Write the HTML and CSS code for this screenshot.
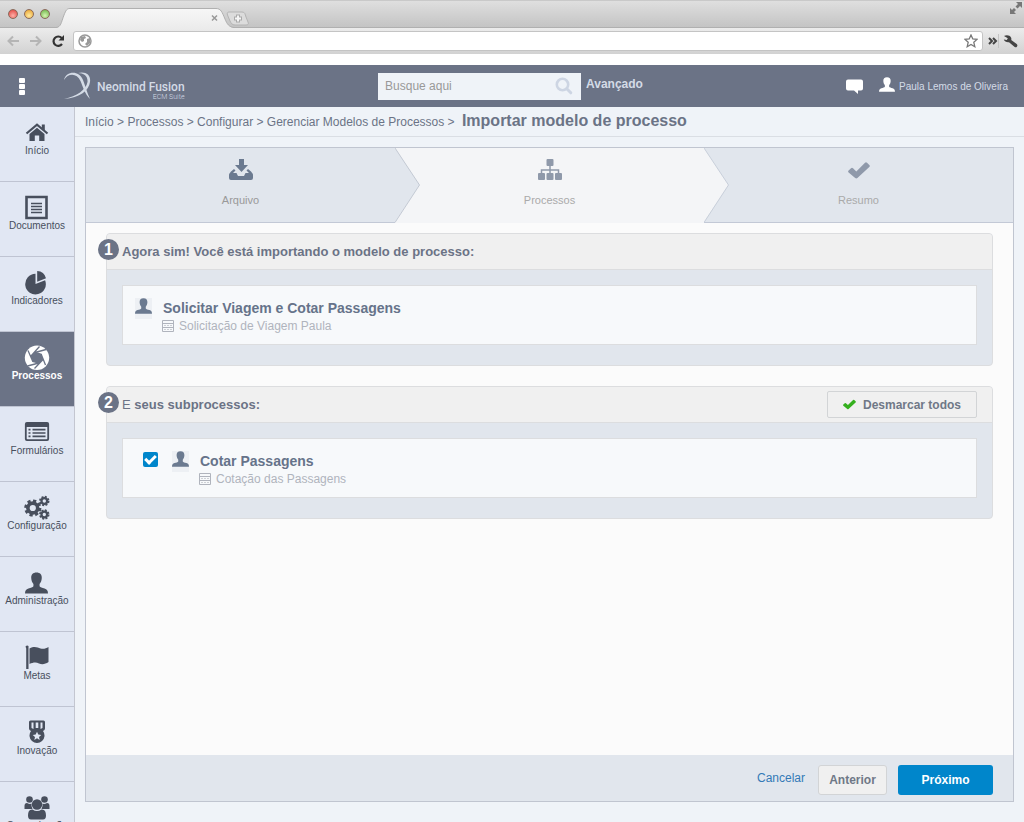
FILE: index.html
```html
<!DOCTYPE html>
<html lang="pt-BR">
<head>
<meta charset="utf-8">
<title>Neomind Fusion - Importar modelo de processo</title>
<link rel="stylesheet" href="styles.css">
</head>
<body>
<svg class="defs" width="0" height="0" aria-hidden="true">
  <symbol id="user" viewBox="0 0 24 22"><path d="M12 0c3.800 0 5.700 2.300 5.500 5.800-.1 2.800-1 4.700-2.300 6.200v2.400c.6 1.200 2.800 1.500 5.200 2.300 2.600.9 3.500 2 3.600 5.300H0c.1-3.300 1-4.400 3.600-5.300 2.400-.8 4.600-1.100 5.200-2.300V12C7.500 10.500 6.600 8.600 6.500 5.800 6.300 2.300 8.200 0 12 0z"/></symbol>
  <symbol id="check" viewBox="0 0 22 17"><path d="M.6 8.600L3 6.200q1-.9 2 0L8.300 9.500 17 .8q1-1 2 0l2.300 2.300q1 1 0 2L9.400 16q-1.100.9-2.200 0L.6 10.600q-1-1 0-2z"/></symbol>
  <symbol id="form" viewBox="0 0 12 12"><path fill="none" stroke="currentColor" d="M.5.5h11v11H.5zM1 3.500h10M1 7.500h10"/><path fill="none" stroke="currentColor" stroke-opacity=".6" stroke-dasharray="2 1" d="M2 5.500h8M2 9.500h8"/></symbol>
</svg>

<div class="browser">
  <div class="tabstrip">
    <span class="lights"><i class="light red"></i><i class="light amber"></i><i class="light green"></i></span>
    <svg class="tab" viewBox="0 0 184 20" width="184" height="20">
      <defs><linearGradient id="tabfill" x2="0" y2="1"><stop offset="0" stop-color="#f7f7f7"/><stop offset="1" stop-color="#ececec"/></linearGradient></defs>
      <path d="M0 20C5 19 5 15 8 7 10 2 11 .5 14 .5H160C165 .5 166 4 169 11c2 5 4 8 9 9z" fill="url(#tabfill)"/>
      <path d="M0 19.500C5 19 5 15 8 7 10 2 11 .5 14 .5H160C165 .5 166 4 169 11c2 5 4 8 9 8.500" fill="none" stroke="#b0b0b0"/>
      <path d="M156 7.500l5 5m0-5l-5 5" stroke="#999" stroke-width="1.500"/>
    </svg>
    <svg class="newtab" viewBox="0 0 24 15" width="24" height="15">
      <path d="M3 1h13c3 0 3 2 4 5l2 5c1 2 0 3-2 3H9c-3 0-4-2-5-4L1.500 4C.8 2 1.500 1 3 1z" fill="#dcdcdc" stroke="#b4b4b4"/>
      <path d="M12 3.500v8M8 7.500h8" stroke="#aaa" stroke-width="4"/><path d="M12 4.500v6M9 7.500h6" stroke="#f5f5f5" stroke-width="2"/>
    </svg>
    <svg class="expand" viewBox="0 0 12 12" width="12" height="12"><path d="M6 0h6v6L10 4 7.500 6.500l-2-2L8 2zM6 12H0V6l2 2 2-2 2 2-2 2z" fill="#777"/></svg>
  </div>
  <div class="toolbar">
    <svg viewBox="0 0 62 18" width="62" height="18" fill="none" stroke-width="2">
      <path d="M13 9H2.500m4.500-4.500L2.500 9 7 13.500M24 9h10.500m-4.500-4.500L34.500 9 30 13.500" stroke="#b5b5b5"/>
      <path d="M56 12a4.700 4.700 0 1 1-.3-6" stroke="#333" stroke-width="2.200"/><path d="M58 3v5.500h-5.500z" fill="#333"/>
    </svg>
    <div class="address">
      <svg viewBox="0 0 14 14" width="14" height="14"><circle cx="7" cy="7" r="6" fill="#fff" stroke="#999" stroke-width="1.500"/><path d="M3 3l4-1 1 2-2 1v2L4 8 2 6zM9 5l3-1v5l-2 2-1 1-2-2 2-2z" fill="#999"/></svg>
      <input type="text" aria-label="Endereço">
      <svg viewBox="0 0 14 14" width="14" height="14"><path d="M7 1l1.800 4 4.200.4-3.200 2.900 1 4.400L7 10.400l-3.800 2.300 1-4.400L1 5.400 5.200 5z" fill="#fff" stroke="#777" stroke-width="1.300"/></svg>
    </div>
    <svg viewBox="0 0 34 16" width="34" height="16"><path d="M1 5l3 3-3 3m4-6l3 3-3 3" fill="none" stroke="#444" stroke-width="2"/><path d="M10.500 1v14" stroke="#c4c4c4"/><path d="M16 3c2.500-1.500 6-.8 7 1.500.5 1 .5 2 .2 2.500l5.500 4c1.700 1.400 0 4-2 2.900l-5.700-4.700c-2 .5-4.500-.7-5.200-2.700l3 .5 1-1.700z" fill="#444"/></svg>
  </div>
</div>

<header class="topbar">
  <div class="brand">
    <button class="dots" aria-label="Menu"><i></i><i></i><i></i></button>
    <svg viewBox="0 0 30 28" width="30" height="28" fill="#d4dbe6"><path d="M1 8C3-1 16-2 20 8c2.500 6 4 13 7 19-5-5-7-12-9.500-18C14 1 5 1 1 8z"/><path d="M15 1c8-2 13 2 12 9-1 8-10 16-26 17 13-3 22-9 23.500-17C25 4 21 1 15 1z"/></svg>
    <div class="brandname"><strong>Neomind Fusion</strong><small>ECM Suite</small></div>
  </div>
  <form class="search">
    <div class="searchbox">
      <input type="text" placeholder="Busque aqui" aria-label="Busque aqui">
      <button type="button" aria-label="Buscar"><svg viewBox="0 0 18 18" width="18" height="18" fill="none" stroke="#cdd5e3"><circle cx="7.500" cy="7.500" r="5.700" stroke-width="2.600"/><path d="M12 12l3.800 3.800" stroke-width="3" stroke-linecap="round"/></svg></button>
    </div>
    <a href="#">Avançado</a>
  </form>
  <div class="account">
    <svg viewBox="0 0 17 15" width="17" height="15" fill="#fff"><path d="M2 .5h13q2 0 2 2v7q0 2-2 2h-3V15l-4-3.500H2q-2 0-2-2v-7q0-2 2-2z"/></svg>
    <svg class="person" width="16" height="15" fill="#fff"><use href="#user"/></svg>
    <span>Paula Lemos de Oliveira</span>
  </div>
</header>

<div class="app">
  <nav class="sidebar">
    <a href="#"><svg viewBox="0 0 26 25"><path d="M2.500 13.500L13 4.700l10.500 8.800" fill="none" stroke="currentColor" stroke-width="2.200"/><path d="M17.800 4.500h3v6l-3-2.500zM5.500 14L13 7.800l7.500 6.200v7h-5.300v-5.500h-4.400V21H5.500z"/></svg>Início</a>
    <a href="#"><svg viewBox="0 0 26 25"><path d="M2.500 2h20v21h-20z" fill="none" stroke="currentColor" stroke-width="2.600"/><path d="M7 8.500h11M7 11.500h11M7 14.500h11M7 17.500h11" stroke="currentColor" stroke-width="1.500"/></svg>Documentos</a>
    <a href="#"><svg viewBox="0 0 26 25"><path d="M11.500 3.800V14l9.600-3.700A10.300 10.300 0 1 1 11.500 3.800z"/><path d="M13.200 1a9.700 9.700 0 0 1 8.800 7.200l-8.800 3.500z"/></svg>Indicadores</a>
    <a href="#" class="active"><svg viewBox="0 0 26 25"><circle cx="13" cy="12.800" r="12.200"/><path d="M11 7.500l11-3M17.200 9.200L21.500 20M19 14.500l-8.500 9M14.800 18L3.500 21M8.800 16.500L4 5.500M7 11l8.500-9.500M11 7.500l6.200 1.700 1.800 5.300-4.200 3.500-6-1.500L7 11z" fill="none" stroke="#6b7386" stroke-width="1.300"/><path d="M11 7.500l6.200 1.700 1.800 5.300-4.200 3.500-6-1.500L7 11z" fill="#6b7386"/></svg>Processos</a>
    <a href="#"><svg viewBox="0 0 26 25"><path d="M2.900 2h20.200q2 0 2 2v15q0 2-2 2H2.900q-2 0-2-2V4q0-2 2-2zm-.2 5v11.500q0 .8.800.8h19q.8 0 .8-.8V7z" fill-rule="evenodd"/><path d="M4.500 9.700h2m2 0h13M4.500 13h2m2 0h13M4.500 16.300h2m2 0h13" stroke="currentColor" stroke-width="1.700"/></svg>Formulários</a>
    <a href="#"><svg viewBox="0 0 26 25" fill="none" stroke="currentColor"><circle cx="8.800" cy="13" r="4.900" stroke-width="3.600"/><circle cx="8.800" cy="13" r="7" stroke-width="3.200" stroke-dasharray="3.100 2.400"/><circle cx="20.300" cy="6" r="2.800" stroke-width="2.200"/><circle cx="20.300" cy="6" r="4.200" stroke-width="2" stroke-dasharray="1.900 1.400"/><circle cx="20.300" cy="19.500" r="2.800" stroke-width="2.200"/><circle cx="20.300" cy="19.500" r="4.200" stroke-width="2" stroke-dasharray="1.900 1.400"/></svg>Configuração</a>
    <a href="#"><svg viewBox="0 0 26 25"><use href="#user" x="1" y="2" width="23" height="22"/></svg>Administração</a>
    <a href="#"><svg viewBox="0 0 26 25"><path d="M1.500 1.500Q3-.3 4.500 1v23H2.200V3.500zM5.500 3.500c5-3 8-1 11 0 3 .8 5.500 0 8-1.500V17c-3 2.200-6.500 2.700-9.500 1.500-3-1.500-6-1-9.500.5z"/></svg>Metas</a>
    <a href="#"><svg viewBox="0 0 26 25"><path d="M5 2q0-1.500 1.500-1.500h13Q21 .5 21 2v6.500q0 1.500-2 2.500a7.500 7.500 0 1 1-12 0q-2-1-2-2.500zm2.500.5v5.500l2 .9V2.500zm4.200 0V8h2.600V2.500zm4.800 0v6.400l2-.9V2.500z" fill-rule="evenodd"/><path d="M13 11.800l1.300 2.800 3 .3-2.300 2 .7 3-2.700-1.600-2.700 1.600.7-3-2.300-2 3-.3z" fill="#e1e7f3"/></svg>Inovação</a>
    <a href="#"><svg viewBox="0 0 26 25"><circle cx="5.500" cy="4.500" r="3.300"/><circle cx="20.500" cy="4.500" r="3.300"/><path d="M.5 14V11q0-3 2.500-3 3 1.500 4.500.5-.5 3 1 5.500zM25.500 14V11q0-3-2.500-3-3 1.500-4.500.5.500 3-1 5.500z"/><circle cx="13" cy="9.500" r="5.200"/><path d="M4 20.500q0-6.500 4.500-6 4.500 3 9 0 4.500-.5 4.500 6 0 4-3 4h-12q-3 0-3-4z"/></svg>Comunicação</a>
  </nav>

  <main class="main">
    <div class="crumbs">
      <a href="#">Início</a> &gt; <a href="#">Processos</a> &gt; <a href="#">Configurar</a> &gt; <a href="#">Gerenciar Modelos de Processos</a> &gt; <h1>Importar modelo de processo</h1>
    </div>

    <div class="wizard">
      <ol class="steps">
        <li class="step">
          <svg viewBox="0 0 24 22" width="24" height="22" fill="#6b7a90"><path d="M10 0h5v6h4l-6.500 7L6 6h4zM5 10L2 12.500Q0 14.500 0 16.500V19q0 2 2 2h20q2 0 2-2v-2.500q0-2-2-4L19 10l-1.500 1.500L20 14h-3.500L15 17H9l-1.500-3H4l2.500-2.500z"/></svg>
          <span>Arquivo</span>
          <svg class="chevron" viewBox="0 0 26 75"><path d="M0 0L24.500 37 0 74z" fill="#e1e6ed"/><path d="M0 0L24.500 37 0 74.500" fill="none" stroke="#c3c9d3"/></svg>
        </li>
        <li class="step current">
          <svg viewBox="0 0 24 22" width="24" height="22" fill="#8f99aa"><rect x="8.500" width="7" height="7" rx="1"/><rect y="14" width="7" height="7" rx="1"/><rect x="8.500" y="14" width="7" height="7" rx="1"/><rect x="17" y="14" width="7" height="7" rx="1"/><path d="M12 6v9M3.500 14.500V11h17v3.500" fill="none" stroke="#8f99aa" stroke-width="1.500"/></svg>
          <span>Processos</span>
          <svg class="chevron" viewBox="0 0 26 75"><path d="M0 0L24.500 37 0 74z" fill="#f4f5f7"/><path d="M0 0L24.500 37 0 74.500" fill="none" stroke="#c8cfda"/></svg>
        </li>
        <li class="step">
          <svg width="22" height="22" fill="#8f99aa"><use href="#check" y="3" width="22" height="17"/></svg>
          <span>Resumo</span>
        </li>
      </ol>

      <div class="content">
        <section class="box">
          <header><b class="num">1</b><h2>Agora sim! Você está importando o modelo de processo:</h2></header>
          <div class="boxbody">
            <article class="card">
              <span class="avatar"><svg width="17" height="16"><use href="#user"/></svg></span>
              <div><h3>Solicitar Viagem e Cotar Passagens</h3><p><svg width="12" height="12"><use href="#form"/></svg>Solicitação de Viagem Paula</p></div>
            </article>
          </div>
        </section>
        <section class="box">
          <header><b class="num">2</b><h2><span>E</span> seus subprocessos:</h2>
            <button type="button" class="toggle"><svg width="13" height="11" fill="#35b01e"><use href="#check"/></svg>Desmarcar todos</button>
          </header>
          <div class="boxbody">
            <article class="card selectable">
              <input type="checkbox" id="sub" checked>
              <span class="avatar"><svg width="17" height="16"><use href="#user"/></svg></span>
              <div><h3><label for="sub">Cotar Passagens</label></h3><p><svg width="12" height="12"><use href="#form"/></svg>Cotação das Passagens</p></div>
            </article>
          </div>
        </section>
      </div>

      <footer class="actions">
        <a href="#">Cancelar</a>
        <button type="button" class="prev">Anterior</button>
        <button type="button" class="next">Próximo</button>
      </footer>
    </div>
  </main>
</div>
</body>
</html>
```

FILE: styles.css
```css
* { box-sizing: border-box; }

body {
  margin: 0;
  height: 100vh;
  overflow: hidden;
  display: flex;
  flex-direction: column;
  background: #fff;
  font-family: "Liberation Sans", Arial, sans-serif;
  font-size: 12px;
  color: #6b7386;
}

h1, h2, h3, p, ol { margin: 0; padding: 0; }
a { color: inherit; text-decoration: none; }
button, input { font: inherit; color: inherit; }
svg { display: block; flex: none; }
.defs { position: absolute; }

/* Browser window */
.browser { margin-bottom: 11px; flex: none; }
.tabstrip {
  display: flex;
  align-items: flex-end;
  height: 28px;
  padding: 0 2px 0 8px;
  background: linear-gradient(#dfdfdf, #c4c4c4);
  border-top: 1px solid #c9c9c9;
  border-bottom: 1px solid #b0b0b0;
}
.lights { display: flex; gap: 6px; align-self: center; width: 48px; }
.light { width: 10px; height: 10px; border-radius: 50%; border: 1px solid #8a6a5a; }
.red { background: radial-gradient(circle at 50% 70%, #ffb0a8, #dd3b36); }
.amber { background: radial-gradient(circle at 50% 70%, #ffeaa0, #e79b25); }
.green { background: radial-gradient(circle at 50% 70%, #d5f5b0, #62ae3f); }
.tab { margin-bottom: -1px; }
.newtab { margin: 0 auto 1px -14px; }
.expand { align-self: flex-start; margin-top: 1px; }
.toolbar {
  display: flex;
  align-items: center;
  height: 26px;
  gap: 5px;
  padding: 0 2px 0 6px;
  background: linear-gradient(#ececec, #d2d2d2);
}
.address {
  flex: 1;
  display: flex;
  align-items: center;
  height: 20px;
  padding: 0 4px;
  background: #fff;
  border: 1px solid #c4c4c4;
  border-radius: 3px;
}
.address input { flex: 1; min-width: 0; height: 16px; border: 0; outline: 0; background: none; }

/* Top bar */
.topbar {
  flex: none;
  display: grid;
  grid-template-columns: 1fr auto 1fr;
  align-items: center;
  height: 42px;
  padding: 0 14px 0 11px;
  background: #6b7386;
  color: #d4dbe6;
}
.brand { display: flex; align-items: center; }
.dots {
  display: flex;
  flex-direction: column;
  gap: 1px;
  width: 52px;
  padding: 0 8px;
  border: 0;
  background: none;
}
.dots i { width: 6px; height: 5px; border-radius: 1px; background: #fff; }
.brandname {
  display: flex;
  flex-direction: column;
  align-items: flex-end;
  padding: 8px 0 0 4px;
  font-family: Roboto, "Open Sans", sans-serif;
}
.brandname strong { font-size: 12px; font-weight: 500; line-height: 14px; }
.brandname small { font-size: 7px; font-weight: 300; line-height: 6px; }
.search { display: flex; gap: 5px; }
.searchbox {
  display: flex;
  align-items: center;
  width: 203px;
  height: 27px;
  padding: 0 8px 0 7px;
  background: #eff3f8;
}
.searchbox input { flex: 1; min-width: 0; padding: 0; border: 0; outline: 0; background: none; }
.searchbox input::placeholder { color: #999; }
.searchbox button { padding: 0; border: 0; background: none; }
.search a { font-weight: 700; line-height: 22px; }
.account { display: flex; justify-content: flex-end; align-items: center; padding-right: 2px; font-size: 10px; }
.person { margin: 0 4px 3px 16px; }

/* Sidebar */
.app { flex: 1; display: flex; min-height: 0; background: #eff3f8; }
.sidebar {
  flex: none;
  width: 75px;
  overflow: hidden;
  background: #e1e7f3;
  border-right: 1px solid #c3c6d0;
}
.sidebar a {
  display: flex;
  flex-direction: column;
  align-items: center;
  height: 75px;
  padding-top: 13px;
  border-bottom: 1px solid #bfc4d2;
  color: #484f5d;
  font-size: 10px;
  line-height: 12px;
}
.sidebar svg { width: 26px; height: 25px; fill: currentColor; }
.sidebar svg[fill="none"] { fill: none; }
.sidebar .active { background: #6b7386; color: #fff; font-weight: 700; }

/* Main column */
.main { flex: 1; min-width: 0; display: flex; flex-direction: column; }
.crumbs {
  height: 30px;
  padding: 4px 10px 0;
  border-bottom: 1px solid #dadee4;
  line-height: 20px;
  white-space: nowrap;
}
.crumbs h1 { display: inline; margin-left: 4px; font-size: 16px; }
.wizard {
  flex: 1;
  display: flex;
  flex-direction: column;
  margin: 10px 10px 20px;
  border: 1px solid #c0c5d0;
  background: #fbfbfb;
}
.steps { display: grid; grid-template-columns: repeat(3, 1fr); list-style: none; }
.step {
  position: relative;
  display: flex;
  flex-direction: column;
  align-items: center;
  gap: 12px;
  height: 75px;
  padding-top: 11px;
  background: #e1e6ed;
  border-bottom: 1px solid #c3c9d6;
  color: #aaa;
  font-size: 11px;
  line-height: 14px;
}
.step:first-child { color: #999; }
.current { background: #f4f5f7; border-bottom-color: #f4f5f7; }
.chevron { position: absolute; left: 100%; top: 0; z-index: 1; width: 26px; height: 75px; }

.content { flex: 1; display: flex; flex-direction: column; gap: 20px; padding: 10px 20px; }
.box {
  border: 1px solid #dcdddf;
  border-radius: 4px;
  background: #e1e6ed;
}
.box > header {
  position: relative;
  display: flex;
  align-items: center;
  justify-content: space-between;
  height: 36px;
  padding: 0 15px;
  background: #f0f0f0;
  border-bottom: 1px solid #dcdddf;
  border-radius: 3px 3px 0 0;
}
.box h2 { font-size: 13px; }
.box h2 span { font-weight: 400; }
.num {
  position: absolute;
  left: -9px;
  top: 5px;
  width: 21px;
  height: 21px;
  border-radius: 50%;
  background: #6b7386;
  color: #fff;
  font-size: 16px;
  line-height: 21px;
  text-align: center;
}
.boxbody { padding: 15px 15px 20px; }
.card {
  display: flex;
  gap: 10px;
  padding: 12px 12px 10px;
  background: #f7f9fb;
  border: 1px solid #dcdddf;
}
.selectable { padding-left: 20px; }
.avatar { width: 17px; height: 21px; background: #edf0f4; }
.avatar svg { fill: #6b7a90; }
.card h3 { padding: 1px 0 0 1px; font-size: 14px; line-height: 19px; color: #66738a; }
.card p { display: flex; align-items: center; gap: 5px; line-height: 16px; color: #b0b4bd; }
.selectable input {
  appearance: none;
  width: 15px;
  height: 15px;
  margin: 1px 4px 0 0;
  border-radius: 2px;
  background: #0086cb;
  display: grid;
  place-items: center;
}
.selectable input:checked::before {
  content: "";
  box-sizing: border-box;
  width: 11px;
  height: 7px;
  margin-bottom: 3px;
  border: solid #fff;
  border-width: 0 0 3px 3px;
  transform: rotate(-45deg);
}
.toggle, .prev, .next {
  border: 1px solid #d2d4d6;
  border-radius: 2px;
  background: #f0f0f0;
  color: #6f7887;
  font-weight: 700;
  cursor: pointer;
}
.toggle {
  display: flex;
  align-items: center;
  justify-content: center;
  gap: 7px;
  width: 150px;
  height: 27px;
  padding: 0;
  white-space: nowrap;
}

.actions {
  display: flex;
  justify-content: flex-end;
  height: 46px;
  padding: 10px 20px 6px;
  background: #e1e6ed;
}
.actions a { margin-right: 13px; line-height: 26px; color: #337ab7; }
.prev { width: 69px; height: 30px; margin-right: 11px; padding: 0; border-radius: 3px; }
.next { width: 95px; height: 30px; border: 0; border-radius: 3px; background: #0086cb; color: #fff; }
```
